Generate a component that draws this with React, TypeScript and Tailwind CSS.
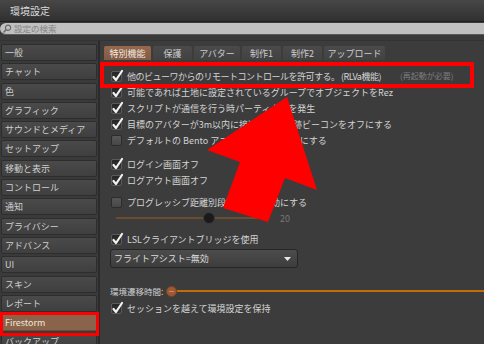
import React from "react";

const FONT = { fontFamily: '"Noto Sans CJK JP", "Noto Sans", sans-serif' };

function Check({ checked }: { checked: boolean }) {
  if (checked) {
    return (
      <div className="relative w-[11px] h-[11px] shrink-0 rounded-[2px] border border-[#5a5a5a] bg-gradient-to-b from-[#262626] to-[#353535]">
        <svg className="absolute left-[-1px] top-[-3px]" width="13" height="14" viewBox="0 0 13 14">
          <path d="M2.5 8 L5 11 L11 2" fill="none" stroke="#f2f2f2" strokeWidth="2.2" strokeLinecap="round" strokeLinejoin="round" />
        </svg>
      </div>
    );
  }
  return <div className="w-[11px] h-[11px] shrink-0 rounded-[2px] border border-[#2c2c2c] bg-gradient-to-b from-[#575757] to-[#474747]" />;
}

function Row({ checked, children, className = "" }: { checked: boolean; children: React.ReactNode; className?: string }) {
  return (
    <div className={"flex items-center h-[16px] gap-[5px] " + className}>
      <Check checked={checked} />
      <span className="text-[9px] leading-none whitespace-nowrap text-[#d4d4d4]">{children}</span>
    </div>
  );
}

const sidebar = [
  "一般",
  "チャット",
  "色",
  "グラフィック",
  "サウンドとメディア",
  "セットアップ",
  "移動と表示",
  "コントロール",
  "通知",
  "プライバシー",
  "アドバンス",
  "UI",
  "スキン",
  "レポート",
  "Firestorm",
  "バックアップ",
];

const tabs = [
  { label: "特別機能", w: "w-[47px]" },
  { label: "保護", w: "w-[39px]" },
  { label: "アバター", w: "w-[46px]" },
  { label: "制作1", w: "w-[39px]" },
  { label: "制作2", w: "w-[39px]" },
  { label: "アップロード", w: "w-[61px]" },
];

export default function App() {
  return (
    <div style={FONT} className="relative w-[484px] h-[344px] overflow-hidden bg-[#3a3a3a]">
      {/* title bar */}
      <div className="h-[22px] bg-gradient-to-b from-[#474747] to-[#303030] border-b border-[#1f1f1f] flex items-center px-[10px]">
        <span className="text-[10px] text-[#dadada] leading-none">環境設定</span>
      </div>
      {/* search */}
      <div className="h-[18px] bg-[#3a3a3a] pt-[1px]">
        <div className="h-[12px] bg-[#c0c0c0] rounded-l-[6px] border-b border-[#5a5a5a] flex items-center pl-[3px] gap-[2px]">
          <svg width="9" height="9" viewBox="0 0 9 9">
            <circle cx="5" cy="3.8" r="2.6" fill="none" stroke="#6a6a6a" strokeWidth="1.2" />
            <path d="M3 5.8 L1 8" stroke="#6a6a6a" strokeWidth="1.5" strokeLinecap="round" />
          </svg>
          <span className="text-[8.5px] leading-none text-[#858585]">設定の検索</span>
        </div>
      </div>
      {/* main */}
      <div className="flex h-[304px] border-t border-[#333333]">
        <div className="w-[98px] pl-[1px] pr-[1px] pt-[3px] flex flex-col gap-[2.3px] bg-[#3a3a3a]">
          {sidebar.map((s) => (
            <div
              key={s}
              className={
                "h-[17px] shrink-0 rounded-[2px] border flex items-center pl-[3px] text-[9px] leading-none " +
                (s === "Firestorm"
                  ? "bg-[#8a644a] border-[#6d4d38] text-[#f0e6dc]"
                  : "bg-gradient-to-b from-[#4a4a4a] to-[#3f3f3f] border-[#2d2d2d] text-[#cfcfcf]")
              }
            >
              {s}
            </div>
          ))}
        </div>
        <div className="w-[2px] bg-[#2b2b2b]" />
        <div className="flex-1 bg-[#3c3c3c] pt-[5px] pl-[4px]">
          <div className="flex gap-[2px]">
            {tabs.map((t, i) => (
              <div
                key={t.label}
                className={
                  t.w +
                  " h-[14px] rounded-t-[2px] flex items-center justify-center text-[9px] leading-none " +
                  (i === 0
                    ? "bg-gradient-to-b from-[#96694e] to-[#835a42] text-[#f2e8e0]"
                    : "bg-gradient-to-b from-[#4a4a4a] to-[#424242] text-[#cccccc]")
                }
              >
                {t.label}
              </div>
            ))}
          </div>
          <div className="pl-[7px] pt-[8px] flex flex-col">
            <div className="flex items-center h-[16px] gap-[5px]">
              <Check checked />
              <span className="text-[9px] leading-none whitespace-nowrap tracking-[-0.5px] text-[#d4d4d4]">
                他のビューワからのリモートコントロールを許可する。 (RLVa機能)
              </span>
              <span className="ml-[14px] text-[8px] leading-none whitespace-nowrap text-[#7c7c7c]">(再起動が必要)</span>
            </div>
            <Row checked>可能であれば土地に設定されているグループでオブジェクトをRez</Row>
            <Row checked>スクリプトが通信を行う時パーティクルを発生</Row>
            <Row checked>目標のアバターが3m以内に接近したら追跡ビーコンをオフにする</Row>
            <Row checked={false}>デフォルトの Bento アニメーションを無効にする</Row>
            <Row checked className="mt-[8px]">ログイン画面オフ</Row>
            <Row checked>ログアウト画面オフ</Row>
            <Row checked={false} className="mt-[6px]">プログレッシブ距離別段階描画を有効にする</Row>
            <div className="flex items-center h-[16px] pl-[5px]">
              <div className="relative w-[150px] h-[2px] bg-[#6b4c2c]">
                <div className="absolute left-[87px] top-[-5px] w-[12px] h-[12px] rounded-full bg-[#1a1a1a] border border-[#3a3a3a]" />
              </div>
              <span className="ml-[14px] text-[9px] leading-none text-[#777777]">20</span>
            </div>
            <Row checked className="mt-[5px]">LSLクライアントブリッジを使用</Row>
            <div className="mt-[2px] ml-[-1px] w-[188px] h-[19px] rounded-[3px] border border-[#262626] bg-gradient-to-b from-[#4c4c4c] to-[#3d3d3d] flex items-center justify-between pl-[3px] pr-[6px]">
              <span className="text-[9px] leading-none text-[#dcdcdc]">フライトアシスト=無効</span>
              <svg width="7" height="4" viewBox="0 0 7 4">
                <path d="M0 0 L7 0 L3.5 4 Z" fill="#e8e8e8" />
              </svg>
            </div>
            <div className="mt-[15px] ml-[-1px] flex items-center h-[16px]">
              <span className="text-[8.5px] leading-none text-[#d0d0d0] whitespace-nowrap">環境遷移時間:</span>
              <div className="ml-[3px] w-[11px] h-[11px] rounded-full bg-[#9c5a34] border border-[#7a4222] flex items-center justify-center">
                <div className="w-[5px] h-[1px] bg-[#c98a62]" />
              </div>
              <div className="flex-1 h-[2px] bg-[#c26c08]" />
            </div>
            <Row checked className="mt-[1px]">セッションを越えて環境設定を保持</Row>
          </div>
        </div>
      </div>

      {/* annotation overlays */}
      <div className="absolute left-[100px] top-[62px] w-[374px] h-[26px] border-[4px] border-[#ff0000]" />
      <div className="absolute left-[0px] top-[312px] w-[99px] h-[24px] border-[3.5px] border-[#ff0000]" />
      <svg className="absolute left-0 top-0" width="484" height="344" viewBox="0 0 484 344">
        <polygon points="287,97 317,190 285,178 268,222 223,208 240,162 207,150" fill="#ff0000" />
      </svg>
    </div>
  );
}
